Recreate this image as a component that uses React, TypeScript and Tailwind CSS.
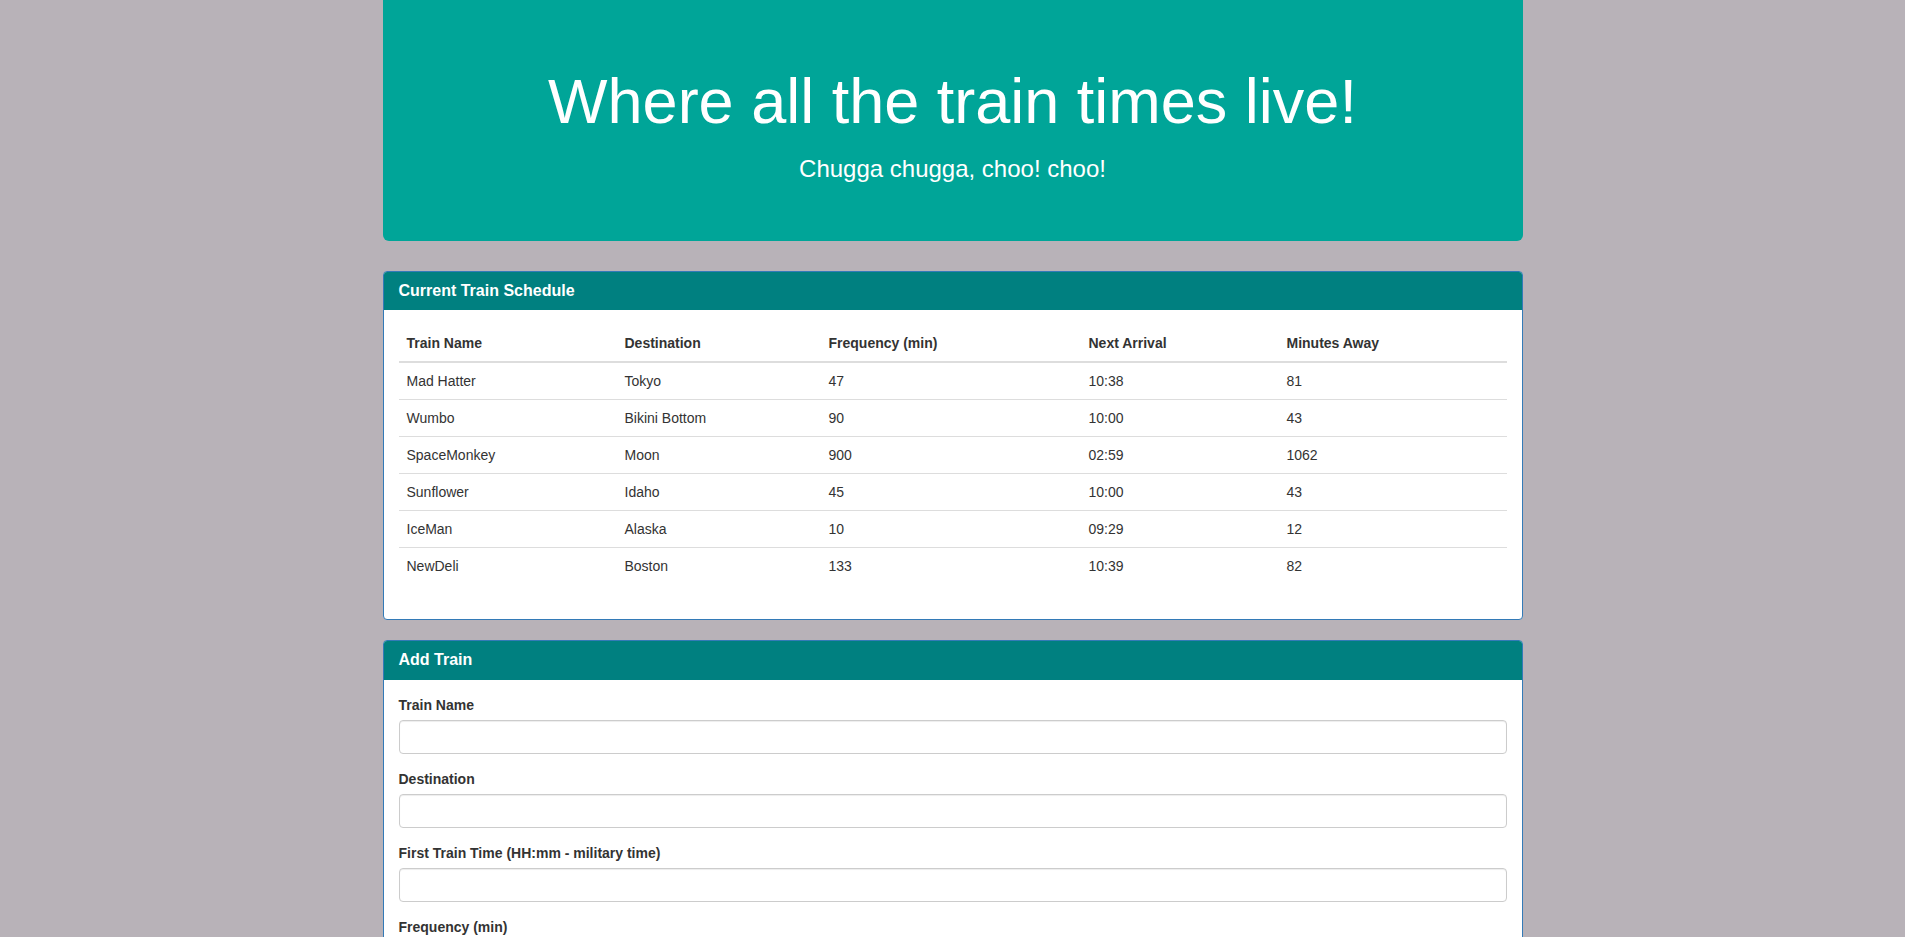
const trains = [
  { name: 'Mad Hatter', dest: 'Tokyo', freq: '47', next: '10:38', away: '81' },
  { name: 'Wumbo', dest: 'Bikini Bottom', freq: '90', next: '10:00', away: '43' },
  { name: 'SpaceMonkey', dest: 'Moon', freq: '900', next: '02:59', away: '1062' },
  { name: 'Sunflower', dest: 'Idaho', freq: '45', next: '10:00', away: '43' },
  { name: 'IceMan', dest: 'Alaska', freq: '10', next: '09:29', away: '12' },
  { name: 'NewDeli', dest: 'Boston', freq: '133', next: '10:39', away: '82' },
];

const fields = ['Train Name', 'Destination', 'First Train Time (HH:mm - military time)', 'Frequency (min)'];

function Panel({ title, children }: { title: string; children: React.ReactNode }) {
  return (
    <div className="mb-5 rounded-[4px] border border-[#337ab7] bg-white">
      <div className="rounded-t-[3px] border-b border-transparent bg-[#008080] px-[15px] py-[10px]">
        <h3 className="text-base font-bold leading-[1.1] text-white">{title}</h3>
      </div>
      <div className="p-[15px]">{children}</div>
    </div>
  );
}

export default function App() {
  return (
    <div
      className="min-h-screen bg-[#b8b2b8] text-[14px] leading-[20px] text-[#333]"
      style={{ fontFamily: '"Liberation Sans", Arial, sans-serif' }}
    >
      <div className="mx-auto w-[1140px]">
        <div className="mb-[30px] rounded-b-[6px] bg-[#00a598] px-[60px] pt-[48px] pb-[48px] text-center text-white">
          <h1 className="mt-[19px] mb-[20px] text-[63px] leading-[1.1]">Where all the train times live!</h1>
          <h3 className="mb-[10px] text-[24px] leading-[1.1]">Chugga chugga, choo! choo!</h3>
        </div>

        <Panel title="Current Train Schedule">
          <table className="mb-5 w-full border-collapse">
            <thead>
              <tr>
                <th className="w-[218px] border-b-2 border-[#ddd] p-2 text-left align-bottom font-bold">Train Name</th>
                <th className="w-[204px] border-b-2 border-[#ddd] p-2 text-left align-bottom font-bold">Destination</th>
                <th className="w-[260px] border-b-2 border-[#ddd] p-2 text-left align-bottom font-bold">Frequency (min)</th>
                <th className="w-[198px] border-b-2 border-[#ddd] p-2 text-left align-bottom font-bold">Next Arrival</th>
                <th className="border-b-2 border-[#ddd] p-2 text-left align-bottom font-bold">Minutes Away</th>
              </tr>
            </thead>
            <tbody>
              {trains.map((t) => (
                <tr key={t.name}>
                  <td className="border-t border-[#ddd] p-2">{t.name}</td>
                  <td className="border-t border-[#ddd] p-2">{t.dest}</td>
                  <td className="border-t border-[#ddd] p-2">{t.freq}</td>
                  <td className="border-t border-[#ddd] p-2">{t.next}</td>
                  <td className="border-t border-[#ddd] p-2">{t.away}</td>
                </tr>
              ))}
            </tbody>
          </table>
        </Panel>

        <Panel title="Add Train">
          <form onSubmit={(e) => e.preventDefault()}>
            {fields.map((f) => (
              <div key={f} className="mb-[15px]">
                <label className="mb-[5px] inline-block font-bold">{f}</label>
                <input
                  type="text"
                  className="block h-[34px] w-full rounded-[4px] border border-[#ccc] bg-white px-3 py-1.5 shadow-[inset_0_1px_1px_rgba(0,0,0,0.075)] outline-none"
                />
              </div>
            ))}
            <button
              type="submit"
              className="rounded-[4px] border border-[#2e6da4] bg-[#337ab7] px-3 py-1.5 text-white"
            >
              Submit
            </button>
          </form>
        </Panel>
      </div>
    </div>
  );
}
